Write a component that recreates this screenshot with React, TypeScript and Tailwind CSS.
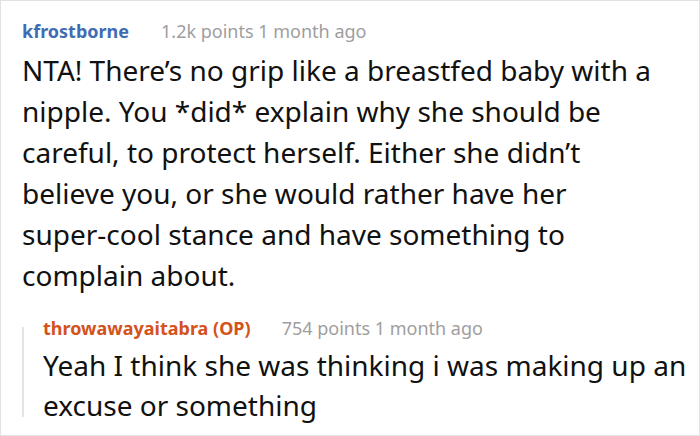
import React from "react";

export default function App() {
  return (
    <div className="w-[700px] h-[436px] bg-white border border-[#e2e2e2] box-border overflow-hidden" style={{ fontFamily: '"Noto Sans", "Open Sans", sans-serif' }}>
      <div className="pl-[21px] pr-[6px] pt-[17px]">
        <div className="flex items-baseline text-[18px] leading-[26px]">
          <span className="font-bold text-[#3f6db3]">kfrostborne</span>
          <span className="ml-[32px] text-[#9e9e9e]">1.2k points 1 month ago</span>
        </div>
        <p className="mt-[6px] w-[652px] text-[28px] leading-[41px] text-[#111]">
          NTA! There’s no grip like a breastfed baby with a nipple. You *did* explain why she should be careful, to protect herself. Either she didn’t believe you, or she would rather have her <span className="whitespace-nowrap">super-cool</span> stance and have something to complain about.
        </p>
        <div className="mt-[19px] flex">
          <div className="w-[2px] shrink-0 bg-[#e4e4e4] mt-[12px] mb-[8px]" />
          <div className="pl-[19px]">
            <div className="flex items-baseline text-[18px] leading-[26px]">
              <span className="font-bold text-[#d4521c]">throwawayaitabra (OP)</span>
              <span className="ml-[31px] text-[#9e9e9e]">754 points 1 month ago</span>
            </div>
            <p className="mt-[4px] text-[28px] leading-[40px] text-[#111]">
              Yeah I think she was thinking i was making up an excuse or something
            </p>
          </div>
        </div>
      </div>
    </div>
  );
}
